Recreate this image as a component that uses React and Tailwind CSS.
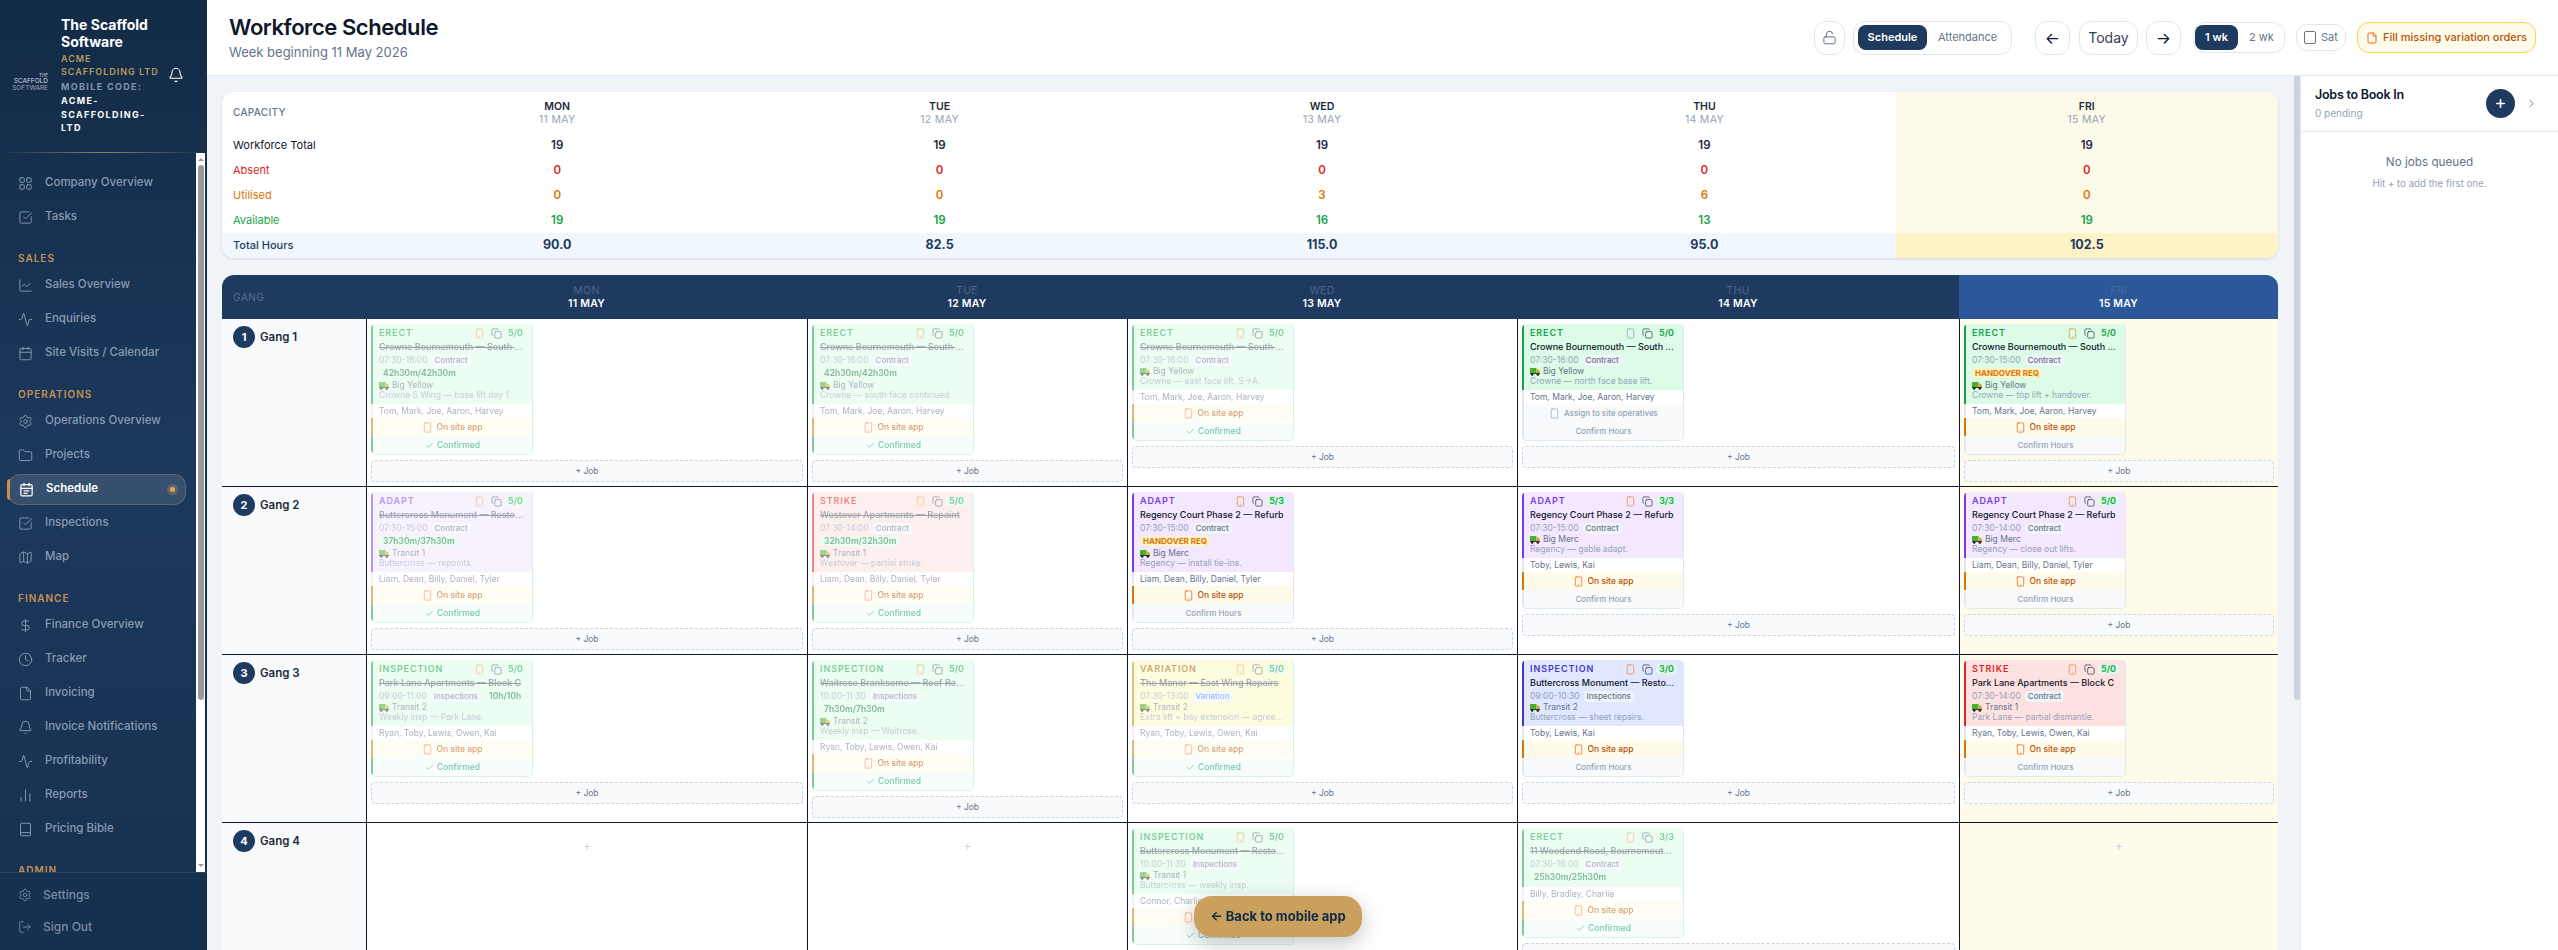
import React from 'react';
import {
  Activity, Bell, Book, Calendar, Check, ChartLine, ChartNoAxesColumn, ChevronRight, Clock, Copy, DollarSign,
  File, Folder, LayoutGrid, LockOpen, LogOut, Map as MapIcon, Plus, Settings, Smartphone, SquareCheckBig,
} from 'lucide-react';

const FONT = "font-['Inter','Liberation_Sans',sans-serif]";

const NAV = [
  { items: [['Company Overview', LayoutGrid], ['Tasks', SquareCheckBig]] },
  { title: 'SALES', items: [['Sales Overview', ChartLine], ['Enquiries', Activity], ['Site Visits / Calendar', Calendar]] },
  { title: 'OPERATIONS', items: [['Operations Overview', Settings], ['Projects', Folder], ['Schedule', null], ['Inspections', SquareCheckBig], ['Map', MapIcon]] },
  { title: 'FINANCE', items: [['Finance Overview', DollarSign], ['Tracker', Clock], ['Invoicing', File], ['Invoice Notifications', Bell], ['Profitability', Activity], ['Reports', ChartNoAxesColumn], ['Pricing Bible', Book]] },
  { title: 'ADMIN', items: [] },
];

const VARIANTS = {
  erect: { top: 'bg-[#dcfce7] border-l-[#16a34a]', label: 'text-[#16a34a]' },
  adapt: { top: 'bg-[#f3e8ff] border-l-[#7c3aed]', label: 'text-[#7c3aed]' },
  strike: { top: 'bg-[#fee2e2] border-l-[#dc2626]', label: 'text-[#dc2626]' },
  indigo: { top: 'bg-[#e0e7ff] border-l-[#4338ca]', label: 'text-[#4338ca]' },
  variation: { top: 'bg-[#fef9c3] border-l-[#ca8a04]', label: 'text-[#a16207]' },
};

const CREW_A = 'Tom, Mark, Joe, Aaron, Harvey';
const CREW_B = 'Liam, Dean, Billy, Daniel, Tyler';
const CREW_C = 'Ryan, Toby, Lewis, Owen, Kai';
const CROWNE = 'Crowne Bournemouth — South Wing Scaffold';
const REGENCY = 'Regency Court Phase 2 — Refurb';
const BUTTER = 'Buttercross Monument — Restoration Works';

const ROWS = [
  {
    n: 1,
    cells: [
      { v: 'erect', label: 'ERECT', title: CROWNE, time: '07:30-16:00', type: 'Contract', hours: '42h30m/42h30m', van: 'Big Yellow', desc: 'Crowne S Wing — base lift day 1.', crew: CREW_A, ratio: '5/0', done: true },
      { v: 'erect', label: 'ERECT', title: CROWNE, time: '07:30-16:00', type: 'Contract', hours: '42h30m/42h30m', van: 'Big Yellow', desc: 'Crowne — south face continued.', crew: CREW_A, ratio: '5/0', done: true },
      { v: 'erect', label: 'ERECT', title: CROWNE, time: '07:30-16:00', type: 'Contract', van: 'Big Yellow', desc: 'Crowne — east face lift, S→A.', crew: CREW_A, ratio: '5/0', done: true },
      { v: 'erect', label: 'ERECT', title: CROWNE, time: '07:30-16:00', type: 'Contract', van: 'Big Yellow', desc: 'Crowne — north face base lift.', crew: CREW_A, ratio: '5/0', assign: true },
      { v: 'erect', label: 'ERECT', title: CROWNE, time: '07:30-15:00', type: 'Contract', handover: true, van: 'Big Yellow', desc: 'Crowne — top lift + handover.', crew: CREW_A, ratio: '5/0' },
    ],
  },
  {
    n: 2,
    cells: [
      { v: 'adapt', label: 'ADAPT', title: BUTTER, time: '07:30-15:00', type: 'Contract', hours: '37h30m/37h30m', van: 'Transit 1', desc: 'Buttercross — repoints.', crew: CREW_B, ratio: '5/0', done: true },
      { v: 'strike', label: 'STRIKE', title: 'Westover Apartments — Repaint', time: '07:30-14:00', type: 'Contract', hours: '32h30m/32h30m', van: 'Transit 1', desc: 'Westover — partial strike.', crew: CREW_B, ratio: '5/0', done: true },
      { v: 'adapt', label: 'ADAPT', title: REGENCY, time: '07:30-15:00', type: 'Contract', handover: true, van: 'Big Merc', desc: 'Regency — install tie-ins.', crew: CREW_B, ratio: '5/3' },
      { v: 'adapt', label: 'ADAPT', title: REGENCY, time: '07:30-15:00', type: 'Contract', van: 'Big Merc', desc: 'Regency — gable adapt.', crew: 'Toby, Lewis, Kai', ratio: '3/3' },
      { v: 'adapt', label: 'ADAPT', title: REGENCY, time: '07:30-14:00', type: 'Contract', van: 'Big Merc', desc: 'Regency — close out lifts.', crew: CREW_B, ratio: '5/0' },
    ],
  },
  {
    n: 3,
    cells: [
      { v: 'erect', label: 'INSPECTION', title: 'Park Lane Apartments — Block C', time: '09:00-11:00', type: 'Inspections', inlineHours: '10h/10h', van: 'Transit 2', desc: 'Weekly insp — Park Lane.', crew: CREW_C, ratio: '5/0', done: true },
      { v: 'erect', label: 'INSPECTION', title: 'Waitrose Branksome — Roof Repairs', time: '10:00-11:30', type: 'Inspections', hours: '7h30m/7h30m', van: 'Transit 2', desc: 'Weekly insp — Waitrose.', crew: CREW_C, ratio: '5/0', done: true },
      { v: 'variation', label: 'VARIATION', title: 'The Manor — East Wing Repairs', time: '07:30-13:00', type: 'Variation', van: 'Transit 2', desc: 'Extra lift + bay extension — agreed yesterday on site', crew: CREW_C, ratio: '5/0', done: true },
      { v: 'indigo', label: 'INSPECTION', title: BUTTER, time: '09:00-10:30', type: 'Inspections', van: 'Transit 2', desc: 'Buttercross — sheet repairs.', crew: 'Toby, Lewis, Kai', ratio: '3/0' },
      { v: 'strike', label: 'STRIKE', title: 'Park Lane Apartments — Block C', time: '07:30-14:00', type: 'Contract', van: 'Transit 1', desc: 'Park Lane — partial dismantle.', crew: CREW_C, ratio: '5/0' },
    ],
  },
  {
    n: 4,
    cells: [
      null,
      null,
      { v: 'erect', label: 'INSPECTION', title: BUTTER, time: '10:00-11:30', type: 'Inspections', van: 'Transit 1', desc: 'Buttercross — weekly insp.', crew: 'Connor, Charlie, Billy', ratio: '5/0', done: true },
      { v: 'erect', label: 'ERECT', title: '11 Woodend Road, Bournemouth Dorset', time: '07:30-16:00', type: 'Contract', hours: '25h30m/25h30m', crew: 'Billy, Bradley, Charlie', ratio: '3/3', done: true },
      null,
    ],
  },
];

const DAYS = [
  { d: 'MON', date: '11 MAY', util: 0, avail: 19, hrs: '90.0' },
  { d: 'TUE', date: '12 MAY', util: 0, avail: 19, hrs: '82.5' },
  { d: 'WED', date: '13 MAY', util: 3, avail: 16, hrs: '115.0' },
  { d: 'THU', date: '14 MAY', util: 6, avail: 13, hrs: '95.0' },
  { d: 'FRI', date: '15 MAY', util: 0, avail: 19, hrs: '102.5' },
];

function ScheduleIcon() {
  return (
    <svg width="15" height="15" viewBox="0 0 24 24" fill="none" stroke="currentColor" strokeWidth="2" strokeLinecap="round" strokeLinejoin="round">
      <path d="M8 2v4M16 2v4" />
      <rect x="3" y="4" width="18" height="18" rx="2" />
      <path d="M3 10h18M8 14h8M8 18h5" />
    </svg>
  );
}

function VanIcon() {
  return (
    <svg width="10" height="9" viewBox="0 0 10 9" className="shrink-0">
      <rect x="0" y="1" width="6.5" height="5.5" fill="#4caf2a" />
      <path d="M6.8 2.5h1.7L10 4.5v2H6.8z" fill="#d9a520" />
      <rect x="0" y="6" width="10" height="1" fill="#3f3f3f" />
      <circle cx="2.2" cy="7.5" r="1.3" fill="#222" />
      <circle cx="7.8" cy="7.5" r="1.3" fill="#222" />
    </svg>
  );
}

function JobCard({ job }) {
  const c = VARIANTS[job.v];
  const typeClass = job.type === 'Variation' ? 'bg-[#eff6ff] text-[#3b82f6]' : 'bg-[#f1f5f9] text-[#64748b]';
  return (
    <div className={`w-[162px] overflow-hidden rounded-[5px] border-y border-r border-t-transparent ${job.done ? 'border-[#a7f3d0] opacity-55' : 'border-[#e2e8f0]'}`}>
      <div className={`border-l-2 pl-[6px] pr-[6px] pt-[3px] pb-[3px] ${c.top}`}>
        <div className="flex h-[12px] items-center justify-between">
          <span className={`text-[9px] font-semibold tracking-[0.1em] ${c.label}`}>{job.label}</span>
          <div className="flex items-center">
            <Smartphone size={11} strokeWidth={1.6} className={job.assign ? 'text-[#94a3b8]' : 'text-[#ea8a3a]'} />
            <Copy size={11} strokeWidth={1.6} className="ml-[6px] text-[#374151]" />
            <span className="ml-[3px] rounded-[3px] bg-[#dcfce7] px-[3px] text-[9px] leading-[10px] font-semibold text-[#16a34a]">{job.ratio}</span>
          </div>
        </div>
        <div className={`h-[15px] truncate text-[9px] leading-[15px] font-medium ${job.done ? 'text-[#475569] line-through' : 'text-[#0f172a]'}`}>{job.title}</div>
        <div className="flex h-[12px] items-center gap-[4px] whitespace-nowrap">
          <span className="text-[8.5px] text-[#94a3b8]">{job.time}</span>
          <span className={`rounded-[3px] px-[3px] text-[8px] leading-[11px] font-medium ${typeClass}`}>{job.type}</span>
          {job.inlineHours && <span className="rounded-full bg-[#dcfce7] px-[4px] text-[8.5px] leading-[10px] font-semibold text-[#15803d]">{job.inlineHours}</span>}
        </div>
        {job.hours && (
          <div className="flex h-[14px] items-center">
            <span className="rounded-full bg-[#dcfce7] px-[4px] text-[8.5px] leading-[10px] font-semibold text-[#15803d]">{job.hours}</span>
          </div>
        )}
        {job.handover && (
          <div className="flex h-[14px] items-center">
            <span className="rounded-[3px] bg-[#fef3c7] px-[3px] text-[8px] leading-[10px] font-bold text-[#d97706]">HANDOVER REQ</span>
          </div>
        )}
        {job.van && (
          <div className="flex h-[10px] items-center gap-[3px] text-[8.5px] text-[#64748b]">
            <VanIcon />
            <span>{job.van}</span>
          </div>
        )}
        {job.desc && <div className="h-[11px] truncate text-[8.5px] leading-[11px] text-[#94a3b8]">{job.desc}</div>}
      </div>
      <div className="h-[14px] border-l-2 border-l-[#e2e8f0] bg-white pl-[6px] text-[8.5px] leading-[14px] text-[#64748b]">{job.crew}</div>
      {job.assign ? (
        <div className="flex h-[18px] items-center justify-center gap-[4px] border-l-2 border-l-[#e2e8f0] bg-[#f8fafc] text-[8px] font-medium text-[#94a3b8]">
          <Smartphone size={11} strokeWidth={1.5} />
          Assign to site operatives
        </div>
      ) : (
        <div className="flex h-[18px] items-center justify-center gap-[3px] border-l-2 border-l-[#d97706] bg-[#fffbeb] text-[8.5px] font-medium text-[#b45309]">
          <Smartphone size={11} strokeWidth={1.5} className="text-[#ea580c]" />
          On site app
        </div>
      )}
      {job.done ? (
        <div className="flex h-[18px] items-center justify-center gap-[3px] border-l-2 border-l-[#16a34a] bg-[#f0fdf4] text-[8.5px] font-medium text-[#059669]">
          <Check size={9} strokeWidth={2} />
          Confirmed
        </div>
      ) : (
        <div className="flex h-[18px] items-center justify-center border-l-2 border-l-[#e2e8f0] bg-[#f8fafc] text-[8px] font-medium text-[#94a3b8]">Confirm Hours</div>
      )}
    </div>
  );
}

function GridCell({ job, today }) {
  return (
    <div className={`border-b border-l border-[#0f172a] p-[4px] pl-[4px] ${today ? 'bg-[#fffbeb]' : 'bg-white'}`}>
      {job ? (
        <>
          <JobCard job={job} />
          <div className="mt-[5px] flex h-[22px] items-center justify-center rounded-[4px] border border-dashed border-[#cbd5e1] bg-[#f8fafc] text-[8.5px] text-[#64748b]">+ Job</div>
        </>
      ) : (
        <div className="pt-[12px] text-center text-[12px] leading-[14px] text-[#cbd5e1]">+</div>
      )}
    </div>
  );
}

function Sidebar() {
  return (
    <aside className="flex h-full w-[207px] shrink-0 flex-col bg-linear-to-b from-[#122b46] via-[#1c385d] to-[#17304f]">
      <div className="relative flex h-[153px] shrink-0 items-start pl-[12px]">
        <div className="mt-[55px] flex h-[38px] w-[38px] shrink-0 flex-col items-end justify-end rounded-[8px] bg-[#152c4a] pr-[2px] pb-[1px] text-right text-[6.5px] leading-[7px] text-[#d5dbe4]">
          <span className="text-[4.5px] leading-[5px]">THE</span>
          <span>SCAFFOLD</span>
          <span className="opacity-70">SOFTWARE</span>
        </div>
        <div className="ml-[11px] w-[100px] pt-[16px]">
          <div className="text-[14px] leading-[17px] font-bold text-white">The Scaffold Software</div>
          <div className="mt-[2px] text-[9px] leading-[13px] font-semibold tracking-[0.11em] text-[#b89a5a]">ACME SCAFFOLDING LTD</div>
          <div className="mt-[2px] text-[9px] leading-[14px] font-bold tracking-[0.15em] text-[#8494ab]">MOBILE CODE:</div>
          <div className="text-[9px] leading-[13.5px] font-bold tracking-[0.15em] text-white">ACME-SCAFFOLDING-LTD</div>
        </div>
        <Bell size={16} strokeWidth={1.6} className="mt-[67px] ml-[7px] shrink-0 text-white" />
        <div className="absolute right-0 bottom-0 left-0 h-px bg-linear-to-r from-transparent via-[#8f8464] to-transparent" />
      </div>
      <div className="flex min-h-0 flex-1">
        <nav className="min-w-0 flex-1 overflow-hidden pt-[13px]">
          {NAV.map((group, gi) => (
            <div key={gi}>
              {group.title && <div className="h-[34px] pt-[19px] pl-[18px] text-[10px] leading-[10px] font-semibold tracking-[0.1em] text-[#c6904f]">{group.title}</div>}
              {group.items.map(([name, Icon]) =>
                name === 'Schedule' ? (
                  <div key={name} className="relative flex h-[34px] items-center pr-[10px] pl-[8px]">
                    <div className="absolute top-[7px] left-[7px] h-[21px] w-[3px] rounded-l bg-[#c6904f]" />
                    <div className="flex h-[31px] w-[178px] items-center rounded-xl border border-[#c9a05c]/30 bg-white/12 pl-[10px] text-[11.5px] font-semibold text-white">
                      <ScheduleIcon />
                      <span className="ml-[12px]">{name}</span>
                      <span className="mr-[10px] ml-auto h-[5px] w-[5px] rounded-full bg-[#e0a84e] shadow-[0_0_0_3px_rgba(224,168,78,0.25)]" />
                    </div>
                  </div>
                ) : (
                  <div key={name} className="flex h-[34px] items-center pl-[18px] text-[11.5px] font-medium text-[#8a9ab3]">
                    <Icon size={15} strokeWidth={1.5} className="shrink-0" />
                    <span className="ml-[12px] whitespace-nowrap">{name}</span>
                  </div>
                ),
              )}
            </div>
          ))}
        </nav>
        <div className="ml-[-1px] flex w-[9px] shrink-0 flex-col items-center bg-white">
          <div className="mt-[5px] h-0 w-0 border-x-[3px] border-b-[3px] border-x-transparent border-b-[#9a9a9a]" />
          <div className="mt-[4px] h-[535px] w-[6px] rounded-[3px] bg-[#9a9a9a]" />
          <div className="mt-auto mb-[5px] h-0 w-0 border-x-[3px] border-t-[3px] border-x-transparent border-t-[#9a9a9a]" />
        </div>
        <div className="w-[2px] shrink-0 bg-[#17304f]" />
      </div>
      <div className="h-[78px] shrink-0 border-t border-white/10 bg-[#16304f] pt-[6px] text-[12px] font-medium text-[#7b8ca6]">
        <div className="flex h-[32px] items-center pl-[18px]">
          <Settings size={14} strokeWidth={1.5} />
          <span className="ml-[11px]">Settings</span>
        </div>
        <div className="flex h-[32px] items-center pl-[18px]">
          <LogOut size={14} strokeWidth={1.5} />
          <span className="ml-[11px]">Sign Out</span>
        </div>
      </div>
    </aside>
  );
}

function TopBar() {
  const btn = 'flex items-center justify-center border border-[#e2e8f0] bg-white';
  return (
    <header className="flex h-[76px] shrink-0 items-center border-b border-[#e2e8f0] bg-white pr-[22px] pl-[22px]">
      <div className="pb-[2px]">
        <h1 className="text-[22px] leading-[28px] font-semibold tracking-[-0.02em] text-[#0f172a]">Workforce Schedule</h1>
        <p className="mt-[2px] text-[13px] leading-[18px] text-[#64748b]">Week beginning 11 May 2026</p>
      </div>
      <div className="ml-auto flex items-center">
        <div className={`${btn} h-[34px] w-[31px] rounded-xl text-[#64748b]`}><LockOpen size={15} strokeWidth={1.6} /></div>
        <div className="ml-[8px] flex h-[34px] w-[159px] items-center rounded-xl border border-[#e2e8f0] pl-[4px] text-[11px]">
          <span className="flex h-[25px] w-[69px] items-center justify-center rounded-lg bg-[#1e3a5f] font-semibold text-white">Schedule</span>
          <span className="ml-[11px] text-[#64748b]">Attendance</span>
        </div>
        <div className={`${btn} ml-[23px] h-[34px] w-[35px] rounded-xl text-[16px] text-[#0f172a]`}>←</div>
        <div className={`${btn} ml-[9px] h-[34px] w-[59px] rounded-xl text-[14px] text-[#334155]`}>Today</div>
        <div className={`${btn} ml-[8px] h-[34px] w-[35px] rounded-xl text-[16px] text-[#0f172a]`}>→</div>
        <div className="ml-[12px] flex h-[31px] w-[92px] items-center rounded-xl border border-[#e2e8f0] pl-[1px] text-[11px]">
          <span className="flex h-[25px] w-[43px] items-center justify-center rounded-lg bg-[#1e3a5f] font-semibold text-white">1 wk</span>
          <span className="ml-[11px] text-[#64748b]">2 wk</span>
        </div>
        <div className="ml-[11px] flex h-[27px] w-[50px] items-center rounded-xl border border-[#e2e8f0] pl-[7px] text-[11px] text-[#64748b]">
          <span className="h-[13px] w-[12px] rounded-[2px] border border-[#6b7280]" />
          <span className="ml-[5px]">Sat</span>
        </div>
        <div className="ml-[11px] flex h-[31px] w-[179px] items-center justify-center gap-[5px] rounded-xl border border-[#fcd34d] bg-[#fffbeb] text-[11px] font-medium text-[#b45309]">
          <File size={12} strokeWidth={1.8} className="text-[#ea580c]" />
          Fill missing variation orders
        </div>
      </div>
    </header>
  );
}

function CapacityCard() {
  const rows = [
    ['Workforce Total', 'text-[#0f172a]', () => 19, 'text-[#1e293b]'],
    ['Absent', 'text-[#dc2626]', () => 0, 'text-[#dc2626]'],
    ['Utilised', 'text-[#d97706]', (d) => d.util, 'text-[#d97706]'],
    ['Available', 'text-[#16a34a]', (d) => d.avail, 'text-[#16a34a]'],
  ];
  return (
    <div className="grid grid-cols-[144px_repeat(5,1fr)] overflow-hidden rounded-xl bg-white shadow-[0_1px_3px_rgba(15,23,42,0.12)]">
      <div className="flex h-[41px] items-center pl-[11px] text-[10px] font-medium tracking-[0.03em] text-[#64748b]">CAPACITY</div>
      {DAYS.map((d, i) => (
        <div key={d.d} className={`flex h-[41px] flex-col items-center justify-center text-[10.5px] leading-[13px] ${i === 4 ? 'bg-[#fefaea]' : ''}`}>
          <span className="font-semibold text-[#1e293b]">{d.d}</span>
          <span className="tracking-[0.03em] text-[#94a3b8]">{d.date}</span>
        </div>
      ))}
      {rows.map(([label, color, get, numColor]) => (
        <React.Fragment key={label}>
          <div className={`flex h-[25px] items-center pl-[11px] text-[11px] ${color}`}>{label}</div>
          {DAYS.map((d, i) => (
            <div key={d.d} className={`flex h-[25px] items-center justify-center text-[11.5px] font-semibold ${numColor} ${i === 4 ? 'bg-[#fefaea]' : ''}`}>{get(d)}</div>
          ))}
        </React.Fragment>
      ))}
      <div className="flex h-[25px] items-center bg-[#f0f7fe] pl-[11px] text-[11px] font-medium text-[#1e3a5f]">Total Hours</div>
      {DAYS.map((d, i) => (
        <div key={d.d} className={`flex h-[25px] items-center justify-center text-[12.5px] font-bold text-[#1e3a5f] ${i === 4 ? 'bg-[#fef3c7]' : 'bg-[#f0f7fe]'}`}>{d.hrs}</div>
      ))}
    </div>
  );
}

function ScheduleGrid() {
  return (
    <div className="mt-[17px] grid grid-cols-[144px_441px_320px_390px_442px_319px] overflow-hidden rounded-t-xl">
      <div className="flex h-[44px] items-center bg-[#1e3a5f] pl-[11px] text-[10px] font-medium tracking-[0.05em] text-[#52657f]">GANG</div>
      {DAYS.map((d, i) => (
        <div key={d.d} className={`flex h-[44px] flex-col items-center justify-center text-[10.5px] leading-[13px] ${i === 4 ? 'bg-[#2c5799]' : 'bg-[#1e3a5f]'}`}>
          <span className={`tracking-[0.03em] ${i === 4 ? 'text-[#4a6a9c]' : 'text-[#52657f]'}`}>{d.d}</span>
          <span className="font-semibold tracking-[0.02em] text-white">{d.date}</span>
        </div>
      ))}
      {ROWS.map((row) => (
        <React.Fragment key={row.n}>
          <div className="flex items-start border-b border-[#0f172a] bg-[#f8fafc] pt-[7px] pl-[11px]">
            <span className="flex h-[22px] w-[22px] shrink-0 items-center justify-center rounded-full bg-[#1e3a5f] text-[11px] font-bold text-white">{row.n}</span>
            <span className="mt-[3px] ml-[5px] text-[11.5px] font-semibold text-[#1e293b]">Gang {row.n}</span>
          </div>
          {row.cells.map((job, i) => <GridCell key={i} job={job} today={i === 4} />)}
        </React.Fragment>
      ))}
    </div>
  );
}

export default function App() {
  return (
    <div className={`relative flex h-screen overflow-hidden bg-white ${FONT}`}>
      <Sidebar />
      <div className="flex min-w-0 flex-1 flex-col">
        <TopBar />
        <div className="flex min-h-0 flex-1">
          <main className="flex min-w-0 flex-1 overflow-hidden bg-[#f0f4f8]">
            <div className="w-[2087px] shrink-0 overflow-hidden pt-[16px] pl-[15px]">
              <div className="w-[2056px]">
                <CapacityCard />
                <ScheduleGrid />
              </div>
            </div>
            <div className="ml-auto h-[624px] w-[6px] shrink-0 rounded-b-[3px] bg-[#cbd5e1]" />
          </main>
          <aside className="w-[258px] shrink-0 border-l border-[#e2e8f0] bg-white">
            <div className="flex h-[56px] items-center border-b border-[#e2e8f0] pr-[20px] pl-[14px]">
              <div>
                <div className="text-[12.5px] leading-[16px] font-semibold tracking-[-0.02em] text-[#0f172a]">Jobs to Book In</div>
                <div className="mt-[3px] text-[10px] leading-[14px] text-[#94a3b8]">0 pending</div>
              </div>
              <div className="ml-auto flex h-[29px] w-[29px] items-center justify-center rounded-full bg-[#1e3a5f] text-white">
                <Plus size={13} strokeWidth={3} />
              </div>
              <ChevronRight size={13} strokeWidth={1.6} className="ml-[10px] text-[#64748b]" />
            </div>
            <div className="pt-[21px] text-center">
              <div className="text-[11.7px] leading-[18px] text-[#64748b]">No jobs queued</div>
              <div className="mt-[6px] text-[9.7px] leading-[14px] text-[#94a3b8]">Hit + to add the first one.</div>
            </div>
          </aside>
        </div>
      </div>
      <div className="fixed bottom-[13px] left-[1194px] flex h-[41px] w-[168px] items-center justify-center rounded-[18px] bg-[#c9a05c] text-[13px] font-bold text-[#12294a] shadow-[0_6px_20px_rgba(15,23,42,0.25)]">
        ← Back to mobile app
      </div>
    </div>
  );
}
